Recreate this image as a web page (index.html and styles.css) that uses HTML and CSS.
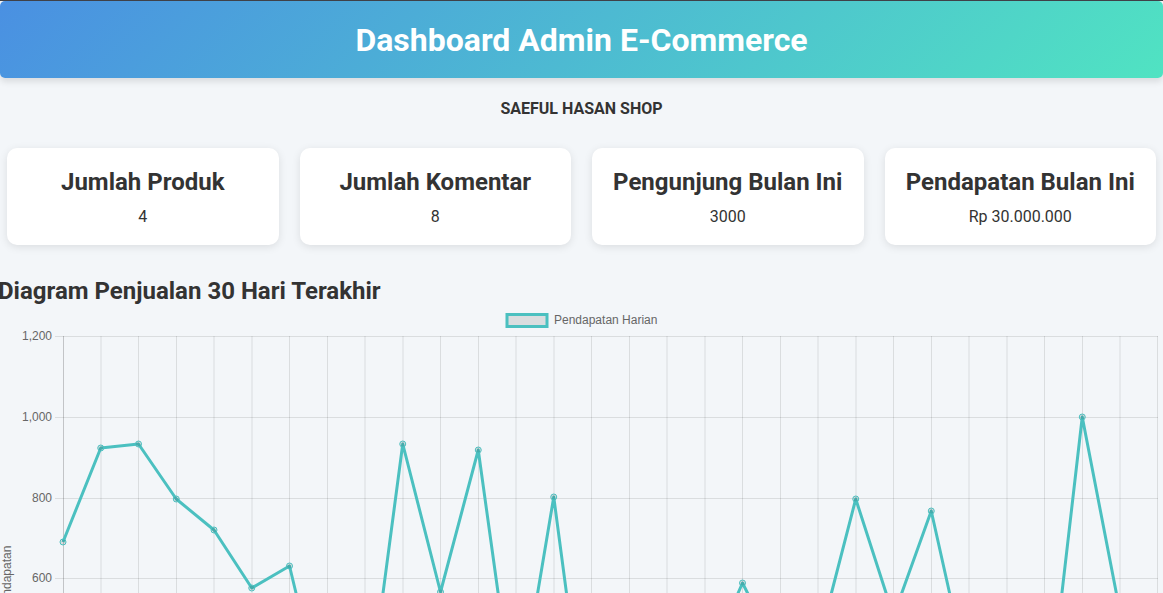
FILE: index.html
```html
<!DOCTYPE html>
<html lang="id">
<head>
<meta charset="utf-8">
<title>Dashboard Admin E-Commerce</title>
<link rel="stylesheet" href="styles.css">
</head>
<body>
<header class="topbar">
  <h1 class="title">Dashboard Admin E-Commerce</h1>
</header>
<p class="shop">SAEFUL HASAN SHOP</p>
<section class="cards">
  <div class="card"><h3 class="card-title">Jumlah Produk</h3><p class="card-value">4</p></div>
  <div class="card"><h3 class="card-title">Jumlah Komentar</h3><p class="card-value">8</p></div>
  <div class="card"><h3 class="card-title">Pengunjung Bulan Ini</h3><p class="card-value">3000</p></div>
  <div class="card"><h3 class="card-title">Pendapatan Bulan Ini</h3><p class="card-value">Rp 30.000.000</p></div>
</section>
<section class="chart-section">
  <h2 class="chart-title">Diagram Penjualan 30 Hari Terakhir</h2>
  <svg class="chart" width="1163" height="560" viewBox="0 0 1163 560" xmlns="http://www.w3.org/2000/svg">
    <!-- legend -->
    <rect x="507" y="9.5" width="40" height="12" fill="rgba(0,0,0,0.1)" stroke="#4bc0c0" stroke-width="3"/>
    <text x="554" y="15.5" class="legend-text" dominant-baseline="middle">Pendapatan Harian</text>
    <!-- horizontal grid -->
    <g stroke="rgba(0,0,0,0.1)" stroke-width="1">
      <line x1="55" y1="31.5" x2="1158" y2="31.5"/>
      <line x1="55" y1="112.5" x2="1158" y2="112.5"/>
      <line x1="55" y1="193.5" x2="1158" y2="193.5"/>
      <line x1="55" y1="273.5" x2="1158" y2="273.5"/>
      <line x1="55" y1="354.5" x2="1158" y2="354.5"/>
      <line x1="55" y1="434.5" x2="1158" y2="434.5"/>
      <line x1="55" y1="515.5" x2="1158" y2="515.5"/>
    </g>
    <!-- vertical grid -->
    <g stroke="rgba(0,0,0,0.1)" stroke-width="1">
      <line x1="101" y1="31" x2="101" y2="523"/>
      <line x1="138.5" y1="31" x2="138.5" y2="523"/>
      <line x1="176.5" y1="31" x2="176.5" y2="523"/>
      <line x1="214" y1="31" x2="214" y2="523"/>
      <line x1="252" y1="31" x2="252" y2="523"/>
      <line x1="289.5" y1="31" x2="289.5" y2="523"/>
      <line x1="327.5" y1="31" x2="327.5" y2="523"/>
      <line x1="365" y1="31" x2="365" y2="523"/>
      <line x1="403" y1="31" x2="403" y2="523"/>
      <line x1="440.5" y1="31" x2="440.5" y2="523"/>
      <line x1="478.5" y1="31" x2="478.5" y2="523"/>
      <line x1="516" y1="31" x2="516" y2="523"/>
      <line x1="554" y1="31" x2="554" y2="523"/>
      <line x1="591.5" y1="31" x2="591.5" y2="523"/>
      <line x1="629.5" y1="31" x2="629.5" y2="523"/>
      <line x1="667" y1="31" x2="667" y2="523"/>
      <line x1="705" y1="31" x2="705" y2="523"/>
      <line x1="742.5" y1="31" x2="742.5" y2="523"/>
      <line x1="780.5" y1="31" x2="780.5" y2="523"/>
      <line x1="818" y1="31" x2="818" y2="523"/>
      <line x1="856" y1="31" x2="856" y2="523"/>
      <line x1="893.5" y1="31" x2="893.5" y2="523"/>
      <line x1="931.5" y1="31" x2="931.5" y2="523"/>
      <line x1="969" y1="31" x2="969" y2="523"/>
      <line x1="1007" y1="31" x2="1007" y2="523"/>
      <line x1="1044.5" y1="31" x2="1044.5" y2="523"/>
      <line x1="1082.5" y1="31" x2="1082.5" y2="523"/>
      <line x1="1120" y1="31" x2="1120" y2="523"/>
      <line x1="1157.5" y1="31" x2="1157.5" y2="523"/>
    </g>
    <line x1="63.5" y1="31" x2="63.5" y2="523" stroke="rgba(0,0,0,0.2)" stroke-width="1"/>
    <!-- y labels -->
    <g class="tick-text" text-anchor="end">
      <text x="52" y="31.5" dominant-baseline="middle">1,200</text>
      <text x="52" y="112.5" dominant-baseline="middle">1,000</text>
      <text x="52" y="193.5" dominant-baseline="middle">800</text>
      <text x="52" y="273.5" dominant-baseline="middle">600</text>
      <text x="52" y="354.5" dominant-baseline="middle">400</text>
      <text x="52" y="434.5" dominant-baseline="middle">200</text>
      <text x="52" y="515.5" dominant-baseline="middle">0</text>
    </g>
    <text class="tick-text" x="0" y="0" text-anchor="middle" dominant-baseline="middle" transform="translate(8 273) rotate(-90)">Pendapatan</text>
    <!-- data line -->
    <polyline fill="none" stroke="#4bc0c0" stroke-width="3" stroke-linejoin="round"
      points="63,237 100.75,143 138.5,139 176.25,194 214,225 251.75,283 289.5,261 327.25,418 365,424 402.75,139 440.5,287 478.25,145 516,417 553.75,192 591.5,477 629.25,455 667,395 704.75,364 742.5,278 780.25,353 818,340 855.75,194 893.5,311 931.25,206 969,375 1006.75,395 1044.5,439 1082.25,112 1120,307 1157.75,345"/>
    <g fill="rgba(0,0,0,0.1)" stroke="#4bc0c0" stroke-width="1">
      <circle cx="63" cy="237" r="3"/>
      <circle cx="100.75" cy="143" r="3"/>
      <circle cx="138.5" cy="139" r="3"/>
      <circle cx="176.25" cy="194" r="3"/>
      <circle cx="214" cy="225" r="3"/>
      <circle cx="251.75" cy="283" r="3"/>
      <circle cx="289.5" cy="261" r="3"/>
      <circle cx="327.25" cy="418" r="3"/>
      <circle cx="365" cy="424" r="3"/>
      <circle cx="402.75" cy="139" r="3"/>
      <circle cx="440.5" cy="287" r="3"/>
      <circle cx="478.25" cy="145" r="3"/>
      <circle cx="516" cy="417" r="3"/>
      <circle cx="553.75" cy="192" r="3"/>
      <circle cx="591.5" cy="477" r="3"/>
      <circle cx="629.25" cy="455" r="3"/>
      <circle cx="667" cy="395" r="3"/>
      <circle cx="704.75" cy="364" r="3"/>
      <circle cx="742.5" cy="278" r="3"/>
      <circle cx="780.25" cy="353" r="3"/>
      <circle cx="818" cy="340" r="3"/>
      <circle cx="855.75" cy="194" r="3"/>
      <circle cx="893.5" cy="311" r="3"/>
      <circle cx="931.25" cy="206" r="3"/>
      <circle cx="969" cy="375" r="3"/>
      <circle cx="1006.75" cy="395" r="3"/>
      <circle cx="1044.5" cy="439" r="3"/>
      <circle cx="1082.25" cy="112" r="3"/>
      <circle cx="1120" cy="307" r="3"/>
      <circle cx="1157.75" cy="345" r="3"/>
    </g>
  </svg>
</section>
</body>
</html>
```
FILE: styles.css
```css
html {
  background: #f3f6f9;
}
body {
  margin: 0;
  border-top: 1px solid #3f4148;
  font-family: Roboto, "Liberation Sans", Arial, sans-serif;
  color: #333;
  background: #f3f6f9;
  overflow-x: hidden;
}
.topbar {
  background: linear-gradient(135deg, #4a90e2, #50e3c2);
  padding: 21px 20px 19px;
  border-radius: 5px;
  box-shadow: 0 4px 6px rgba(0, 0, 0, 0.1);
  text-align: center;
}
.title {
  margin: 0;
  font-size: 32px;
  line-height: 37px;
  font-weight: 700;
  color: #fff;
}
.shop {
  margin: 21px 0 0;
  text-align: center;
  font-size: 16px;
  line-height: 19px;
  font-weight: 700;
  color: #333;
}
.cards {
  display: flex;
  gap: 21px;
  padding: 0 7px;
  margin-top: 30px;
}
.card {
  flex: 1 1 0;
  background: #fff;
  border-radius: 10px;
  box-shadow: 0 2px 8px rgba(0, 0, 0, 0.1);
  padding: 20px 10px 19px;
  text-align: center;
}
.card-title {
  margin: 0 0 11px;
  font-size: 24px;
  line-height: 28px;
  font-weight: 700;
  color: #333;
}
.card-value {
  margin: 0;
  font-size: 16px;
  line-height: 19px;
  color: #333;
}
.chart-section {
  margin-top: 32px;
}
.chart-title {
  margin: 0 0 0 -2px;
  font-size: 24px;
  line-height: 28px;
  font-weight: 700;
  color: #333;
}
.chart {
  display: block;
}
.legend-text,
.tick-text {
  font-family: "Liberation Sans", Arial, sans-serif;
  font-size: 12px;
  fill: #666;
}
```
